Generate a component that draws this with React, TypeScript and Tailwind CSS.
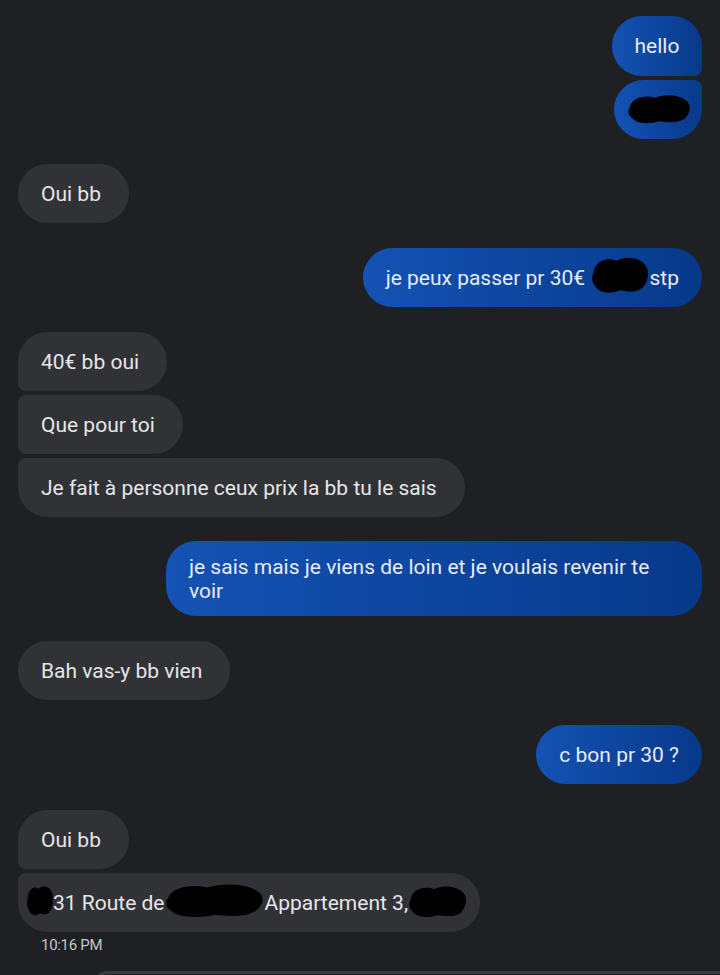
import React from "react";

const font = { fontFamily: "Roboto, 'Noto Sans', sans-serif" };

function Blob({ className }: { className: string }) {
  return (
    <svg className={`absolute ${className}`} viewBox="0 0 100 60" preserveAspectRatio="none">
      <path
        d="M6 26 C8 10 28 2 44 9 C58 1 82 3 92 15 C100 24 97 38 90 47 C80 58 62 55 50 53 C36 59 16 58 9 47 C2 40 3 32 6 26 Z"
        fill="#000"
      />
    </svg>
  );
}

function In({ children, className = "" }: { children: React.ReactNode; className?: string }) {
  return (
    <div
      className={`relative self-start min-h-[59px] flex items-center bg-[#313236] text-[#e6e6e8] text-[21px] leading-[24px] pl-[23px] pr-[28px] py-[13px] ${className}`}
    >
      {children}
    </div>
  );
}

function Out({ children, className = "" }: { children: React.ReactNode; className?: string }) {
  return (
    <div
      className={`relative self-end min-h-[59px] flex items-center bg-gradient-to-r from-[#1452b4] to-[#07398a] text-[#e6ecf7] text-[21px] leading-[24px] px-[23px] py-[13px] ${className}`}
    >
      <div>{children}</div>
    </div>
  );
}

export default function App() {
  return (
    <div className="w-[720px] h-[975px] bg-[#1f2024] overflow-hidden relative" style={font}>
      <div className="flex flex-col px-[18px] pt-[16px]">
        <div className="flex flex-col gap-[4px]">
          <Out className="rounded-[30px] rounded-br-[8px] w-[90px] h-[60px] justify-center">hello</Out>
          <Out className="rounded-[30px] rounded-tr-[8px] w-[88px] h-[58px] min-h-[58px]">
            <span className="inline-block w-[40px]">&nbsp;</span>
            <Blob className="left-[12px] top-[13px] w-[66px] h-[32px]" />
          </Out>
        </div>

        <div className="h-[25px]" />
        <In className="rounded-[30px]">Oui bb</In>

        <div className="h-[25px]" />
        <Out className="rounded-[30px]">
          je peux passer pr 30€{" "}
          <span className="relative inline-block w-[54px] h-[20px] align-middle">
            <Blob className="left-[0px] top-[-14px] w-[60px] h-[40px]" />
          </span>{" "}
          stp
        </Out>

        <div className="h-[25px]" />
        <div className="flex flex-col gap-[4px]">
          <In className="rounded-[30px] rounded-bl-[8px]">40€ bb oui</In>
          <In className="rounded-[30px] rounded-tl-[8px] rounded-bl-[8px]">Que pour toi</In>
          <In className="rounded-[30px] rounded-tl-[8px]">Je fait à personne ceux prix la bb tu le sais</In>
        </div>

        <div className="h-[24px]" />
        <Out className="rounded-[30px] w-[536px] min-h-[75px]">
          je sais mais je viens de loin et je voulais revenir te
          <br />
          voir
        </Out>

        <div className="h-[25px]" />
        <In className="rounded-[30px]">Bah vas-y bb vien</In>

        <div className="h-[25px]" />
        <Out className="rounded-[30px]">c bon pr 30 ?</Out>

        <div className="h-[26px]" />
        <div className="flex flex-col gap-[4px]">
          <In className="rounded-[30px] rounded-bl-[8px] h-[58px] min-h-[58px]">Oui bb</In>
          <In className="rounded-[30px] rounded-tl-[8px] w-[462px] whitespace-nowrap">
            <span className="pl-[12px]">31 Route de</span>
            <span className="inline-block w-[100px]" />
            <span>Appartement 3,</span>
            <Blob className="left-[8px] top-[11px] w-[28px] h-[33px]" />
            <Blob className="left-[144px] top-[9px] w-[104px] h-[37px]" />
            <Blob className="left-[389px] top-[11px] w-[61px] h-[35px]" />
          </In>
        </div>
        <div className="pl-[23px] pt-[3px] text-[15px] leading-[20px] text-[#c4c5c8] tracking-[-0.3px]">10:16 PM</div>
      </div>

      <div className="absolute left-[95px] right-0 top-[971px] h-[20px] rounded-tl-[12px] border-t-[3px] border-l-[3px] border-[#3a3b40] bg-[#1f2024]" />
    </div>
  );
}
